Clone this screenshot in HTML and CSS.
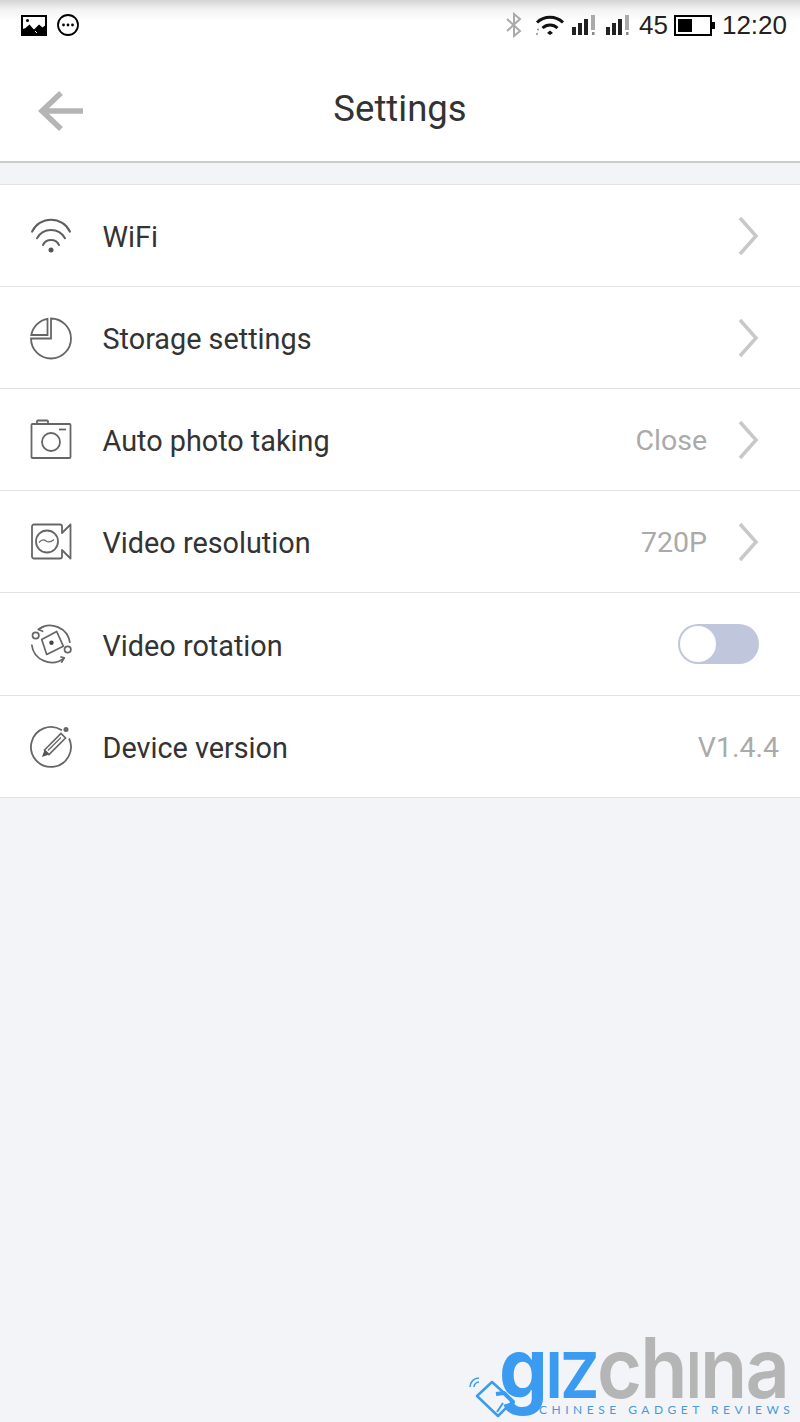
FILE: index.html
```html
<!DOCTYPE html>
<html lang="en">
<head>
<meta charset="utf-8">
<title>Settings</title>
<link rel="stylesheet" href="styles.css">
</head>
<body>
<div class="screen">
  <div class="statusbar">
    <div class="status-left">
      <svg class="ico-img" viewBox="0 0 26 21"><rect width="26" height="21" fill="#000"/><path d="M2 2h22v8.500l-2.500 2-3.500-3-5 5-1.500-1.500-3-3.500-4 3.500L2 14z" fill="#fff"/><circle cx="6.500" cy="5.500" r="1.500" fill="#000"/><path d="M14 16l2 2" stroke="#fff"/></svg>
      <svg class="ico-more" viewBox="0 0 24 24"><circle cx="12" cy="12" r="10" fill="none" stroke="#000" stroke-width="1.800"/><circle cx="7.500" cy="12" r="1.400"/><circle cx="12" cy="12" r="1.400"/><circle cx="16.500" cy="12" r="1.400"/></svg>
    </div>
    <div class="status-right">
      <svg class="ico-bt" viewBox="0 0 20 26"><path d="M3 7l13 12-6 5V2l6 5L3 19" fill="none" stroke="#aaa" stroke-width="2"/></svg>
      <svg class="ico-wifi" viewBox="0 0 30 22"><path d="M2 8.500a19 19 0 0 1 26 0" fill="none" stroke="#111" stroke-width="3"/><path d="M7.500 14a11 11 0 0 1 15 0" fill="none" stroke="#111" stroke-width="3"/><path d="M12 19l3-2.500 3 2.500-3 2z" fill="#111"/><circle cx="2" cy="20" r="1" fill="#888"/><circle cx="3" cy="15.500" r="1" fill="#888"/></svg>
      <svg class="ico-sig" viewBox="0 0 26 22"><rect x="0" y="13" width="4" height="8" fill="#222"/><rect x="6" y="9" width="4" height="12" fill="#222"/><rect x="12" y="5" width="4" height="16" fill="#222"/><rect x="19" y="1" width="4" height="15" fill="#aaa"/><rect x="20" y="18" width="2.500" height="3" fill="#888"/></svg>
      <svg class="ico-sig" viewBox="0 0 26 22"><rect x="0" y="13" width="4" height="8" fill="#222"/><rect x="6" y="9" width="4" height="12" fill="#222"/><rect x="12" y="5" width="4" height="16" fill="#222"/><rect x="19" y="1" width="4" height="15" fill="#aaa"/><rect x="20" y="18" width="2.500" height="3" fill="#888"/></svg>
      <span class="net">45</span>
      <svg class="ico-batt" viewBox="0 0 41 21"><rect x="1" y="1" width="36" height="19" fill="none" stroke="#000" stroke-width="2"/><rect x="4" y="4" width="14" height="13"/><rect x="38" y="7" width="3" height="7"/></svg>
      <span class="time">12:20</span>
    </div>
  </div>

  <header class="topbar">
    <button class="back" aria-label="Back">
      <svg viewBox="0 0 46 40"><path d="M45 20H5M23 2L4 20l19 18" fill="none" stroke="#b5b5b5" stroke-width="5.500"/></svg>
    </button>
    <h1>Settings</h1>
  </header>

  <div class="band"></div>

  <ul class="list">
    <li class="row">
      <svg class="ri" viewBox="0 0 44 44"><g fill="none" stroke="#5f5f5f" stroke-width="2" stroke-linecap="round"><path d="M3 17.700a21 21 0 0 1 38 0"/><path d="M8 24.300a16 16 0 0 1 28 0"/><path d="M14 31a9 9 0 0 1 16 0"/></g><circle cx="22" cy="36" r="2.500" fill="#555"/></svg>
      <span class="label">WiFi</span>
      <svg class="chev" viewBox="0 0 21 40"><path d="M2 2l16 18L2 38" fill="none" stroke="#c8c8c8" stroke-width="3.500"/></svg>
    </li>
    <li class="row">
      <svg class="ri" viewBox="0 0 44 44"><g fill="none" stroke="#666" stroke-width="1.800"><path d="M22 2.500a20 20 0 1 1-20 20h20z"/><path d="M18.500 2.800V19H2.300A20 20 0 0 1 18.500 2.800z"/></g></svg>
      <span class="label">Storage settings</span>
      <svg class="chev" viewBox="0 0 21 40"><path d="M2 2l16 18L2 38" fill="none" stroke="#c8c8c8" stroke-width="3.500"/></svg>
    </li>
    <li class="row">
      <svg class="ri" viewBox="0 0 44 44"><g fill="none" stroke="#666" stroke-width="1.800"><rect x="2.500" y="6" width="39" height="34" rx="1"/><rect x="8" y="2.500" width="11" height="3.500" rx="1"/><circle cx="22" cy="24" r="9"/><path d="M30 11.500h7"/></g></svg>
      <span class="label">Auto photo taking</span>
      <span class="value">Close</span>
      <svg class="chev" viewBox="0 0 21 40"><path d="M2 2l16 18L2 38" fill="none" stroke="#c8c8c8" stroke-width="3.500"/></svg>
    </li>
    <li class="row">
      <svg class="ri" viewBox="0 0 44 44"><g fill="none" stroke="#666" stroke-width="1.800" stroke-linejoin="round"><path d="M5 4.500h26a2 2 0 0 1 2 2V13l8.500-8.500v34L33 30v6.500a2 2 0 0 1-2 2H5a2 2 0 0 1-2-2v-30a2 2 0 0 1 2-2z"/><circle cx="18" cy="21.500" r="11"/><path d="M10 22.500c3-3.500 5-3 7-1.500s4 2 8-1.500" stroke-width="1.200"/></g></svg>
      <span class="label">Video resolution</span>
      <span class="value">720P</span>
      <svg class="chev" viewBox="0 0 21 40"><path d="M2 2l16 18L2 38" fill="none" stroke="#c8c8c8" stroke-width="3.500"/></svg>
    </li>
    <li class="row">
      <svg class="ri" viewBox="0 0 44 44"><g fill="none" stroke="#666" stroke-width="1.700" stroke-linejoin="round"><path d="M9.300 7.500A20 20 0 0 1 41 20.800"/><path d="M2.700 22.500A20 20 0 0 0 35.300 35.800"/><path d="M14.300 4.500l-5 3 5 2M31.300 34.800l4 1-3 5"/><path d="M27.700 9.500L12.700 17.500 17.700 32.500 34.300 24.200z"/><circle cx="6.700" cy="13.500" r="3.200" fill="#fff"/><circle cx="38.700" cy="27.500" r="3.200" fill="#fff"/></g><circle cx="22.500" cy="20.800" r="2.200" fill="#444"/></svg>
      <span class="label">Video rotation</span>
      <span class="toggle"><span class="knob"></span></span>
    </li>
    <li class="row">
      <svg class="ri" viewBox="0 0 44 44"><g fill="none" stroke="#666" stroke-width="1.800"><path d="M32.900 5.200A20 20 0 1 0 40.100 13.500"/><path d="M15.500 25L32 8.500l4.500 4.500L20 29.500z" stroke-width="1.700"/></g><path d="M13 32l2.500-7 4.500 4.500z" fill="#555"/><path d="M19 25.500L32 12.500" stroke="#666" stroke-width="1.200"/><circle cx="37" cy="4.500" r="2.500" fill="#666"/></svg>
      <span class="label">Device version</span>
      <span class="value version">V1.4.4</span>
    </li>
  </ul>

  <div class="logo">
    <svg class="logo-icon" viewBox="0 0 50 44"><g fill="none" stroke="#3a9bf0" stroke-linejoin="round"><path d="M9 20L24 6l21 19-15 15z" stroke-width="2.500"/><path d="M2 11a9 9 0 0 1 9-9M6 11a5 5 0 0 1 5-5" stroke-width="1.500"/><path d="M28 18l8-1 9 9-6 8" stroke-width="4"/><path d="M29 36l6-9" stroke-width="2"/></g></svg>
    <div class="wordmark"><span class="giz">g<span class="cap">iz</span></span><span class="china">ch<span class="cap">i</span>na</span></div>
    <div class="tagline">CHINESE GADGET REVIEWS</div>
  </div>
</div>
</body>
</html>
```
FILE: styles.css
```css
* { box-sizing: border-box; }
html, body { margin: 0; padding: 0; }
body { background: #f2f4f8; font-family: Roboto, "Liberation Sans", sans-serif; }
.screen { position: relative; width: 800px; height: 1422px; overflow: hidden; }

.statusbar {
  height: 50px;
  padding: 13px 13px 0 21px;
  display: flex;
  justify-content: space-between;
  align-items: flex-start;
  background: linear-gradient(#d4d4d4 0, #f4f4f4 10px, #fff 22px);
}
.status-left, .status-right { display: flex; align-items: center; height: 24px; }
.status-left { gap: 9px; }
.ico-img { width: 26px; height: 21px; }
.ico-more { width: 24px; height: 24px; }
.ico-bt { width: 20px; height: 26px; margin-right: 11px; margin-left: 2px; }
.ico-wifi { width: 30px; height: 22px; margin-right: 7px; }
.ico-sig { width: 26px; height: 22px; margin-right: 8px; }
.net, .time { font-family: "Liberation Sans", sans-serif; font-size: 26px; color: #222; line-height: 24px; }
.net { margin-left: -1px; margin-right: 6px; }
.ico-batt { width: 41px; height: 21px; margin-right: 7px; }

.topbar {
  height: 113px;
  background: #fff;
  border-bottom: 2px solid #ccc;
  display: flex;
  align-items: center;
  justify-content: center;
  position: relative;
  padding-top: 5px;
}
.topbar h1 { margin: 0; font-size: 36.500px; font-weight: 400; color: #333; }
.back { position: absolute; left: 38px; top: 41px; width: 46px; height: 40px; padding: 0; border: 0; background: none; }
.back svg { display: block; width: 46px; height: 40px; }

.band { height: 21px; background: #f2f4f8; }

.list { list-style: none; margin: 0; padding: 0; background: #fff; border-top: 1px solid #e3e3e3; }
.row {
  height: 102px;
  border-bottom: 1px solid #e3e3e3;
  display: flex;
  align-items: center;
  padding: 0 21px 0 29px;
}
.row:nth-child(5) { height: 103px; }
.ri { width: 44px; height: 44px; margin-right: 30px; flex: none; }
.label { font-size: 28.800px; line-height: 38px; padding-top: 3px; color: #333; flex: 1; margin-left: -0.500px; }
.value { font-size: 28.500px; line-height: 38px; padding-top: 3px; color: #aaa; margin-right: 31px; }
.version { margin-right: 0; }
.chev { width: 21px; height: 40px; margin-right: 20px; flex: none; }
.toggle {
  width: 81px; height: 40px; margin-right: 20px;
  border-radius: 20px; background: #c0c6dc;
  padding: 2px;
  display: flex; align-items: center;
}
.knob { width: 36px; height: 36px; border-radius: 50%; background: #fff; }

.logo { position: absolute; left: 468px; top: 1330px; width: 332px; height: 92px; }
.logo-icon { position: absolute; left: 0; top: 46px; width: 50px; height: 44px; }
.wordmark {
  position: absolute; left: 31px; top: 7px;
  font-family: Inter, sans-serif; font-size: 84px; font-weight: 700; line-height: 62px;
  letter-spacing: -2px; white-space: nowrap;
  transform: scaleX(0.92); transform-origin: left top;
}
.giz { color: #3a9bf0; }
.china { color: #b5b5b5; font-weight: 600; }
.cap { text-transform: uppercase; font-size: 63px; }
.tagline {
  position: absolute; left: 71px; top: 72px;
  font-family: Lato, sans-serif; font-size: 12px; letter-spacing: 4.500px; color: #4a9ad8; white-space: nowrap;
}
```
